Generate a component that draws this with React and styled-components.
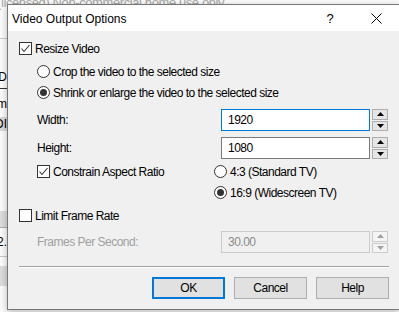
import React from "react";
import styled, { createGlobalStyle } from "styled-components";

const GlobalStyle = createGlobalStyle`
  html, body {
    margin: 0;
    padding: 0;
    background: #ffffff;
  }
  body {
    font-family: "Liberation Sans", Arial, sans-serif;
    font-size: 12px;
    color: #000;
  }
`;

const Desktop = styled.div`
  position: relative;
  width: 399px;
  height: 312px;
  overflow: hidden;
  background: #fbfbfb;
`;

// the app window behind the dialog
const Backdrop = styled.div`
  display: flex;
  flex-direction: column;
`;

const Watermark = styled.div`
  color: #a6a6a6;
  font-size: 13px;
  letter-spacing: -0.4px;
  white-space: nowrap;
  margin: -5px 0 0 -3px;
  height: 12px;
`;

const SideStrip = styled.div`
  width: 7px;
  overflow: hidden;
  display: flex;
  flex-direction: column;
`;

const SideRow = styled.div`
  height: ${(p) => p.$h}px;
  margin-top: ${(p) => p.$mt || 0}px;
  background: ${(p) => p.$bg || "transparent"};
  border-bottom: ${(p) => (p.$line ? `1px solid ${p.$line}` : "none")};
  display: flex;
  justify-content: flex-end;
  align-items: center;
  white-space: nowrap;
  font-size: 12px;
  color: #000;
`;

const Dialog = styled.div`
  position: absolute;
  left: 7px;
  top: 4px;
  width: 392px;
  height: 306px;
  box-sizing: border-box;
  border: 1px solid #777;
  border-right: none;
  background: #f0f0f0;
  box-shadow: 0 2px 7px rgba(0, 0, 0, 0.28);
  display: flex;
  flex-direction: column;
`;

const TitleBar = styled.div`
  height: 26px;
  background: #ffffff;
  display: flex;
  align-items: center;
  padding-left: 4px;
`;

const TitleText = styled.div`
  flex: 1;
  font-size: 12px;
  padding-top: 1px;
`;

const TitleButton = styled.div`
  width: 46px;
  height: 26px;
  display: flex;
  align-items: center;
  justify-content: center;
  font-size: 13px;
`;

const Body = styled.div`
  flex: 1;
  display: flex;
  flex-direction: column;
  padding: 7px 10px 0 11px;
  letter-spacing: -0.5px;
`;

const Row = styled.div`
  height: ${(p) => p.$h || 21}px;
  margin-top: ${(p) => p.$mt || 0}px;
  padding-left: ${(p) => (p.$indent ? 18 : 0)}px;
  display: flex;
  align-items: center;
  color: ${(p) => (p.$disabled ? "#a0a0a0" : "#000")};
`;

const Split = styled.div`
  display: grid;
  grid-template-columns: 177px 1fr;
  align-items: center;
  height: 100%;
  flex: 1;
`;

const Option = styled.label`
  display: flex;
  align-items: center;
  gap: 3px;
  white-space: nowrap;
`;

const Box = styled.span`
  width: 13px;
  height: 13px;
  box-sizing: border-box;
  border: 1px solid #333;
  background: #fff;
  display: flex;
  align-items: center;
  justify-content: center;
`;

const Radio = styled.span`
  width: 13px;
  height: 13px;
  box-sizing: border-box;
  border: 1px solid #333;
  border-radius: 50%;
  background: #fff;
  display: flex;
  align-items: center;
  justify-content: center;
  &::after {
    content: "";
    width: 7px;
    height: 7px;
    border-radius: 50%;
    background: ${(p) => (p.$on ? "#333" : "transparent")};
  }
`;

const Spinner = styled.div`
  display: flex;
  gap: 2px;
  height: 22px;
  margin-left: 7px;
`;

const Field = styled.div`
  width: 149px;
  box-sizing: border-box;
  border: 1px solid ${(p) => (p.$focus ? "#0078d7" : p.$disabled ? "#cccccc" : "#7a7a7a")};
  background: ${(p) => (p.$disabled ? "#f0f0f0" : "#fff")};
  color: ${(p) => (p.$disabled ? "#8a8a8a" : "#000")};
  display: flex;
  align-items: center;
  padding-left: 6px;
`;

const SpinCol = styled.div`
  width: 16px;
  display: flex;
  flex-direction: column;
  gap: 1px;
`;

const SpinBtn = styled.div`
  flex: 1;
  box-sizing: border-box;
  border: 1px solid ${(p) => (p.$disabled ? "#cccccc" : "#adadad")};
  background: ${(p) => (p.$disabled ? "#f4f4f4" : "#e5e5e5")};
  display: flex;
  align-items: center;
  justify-content: center;
`;

const Separator = styled.div`
  margin-top: 13px;
  border-top: 1px solid #a0a0a0;
  border-bottom: 1px solid #ffffff;
`;

const ButtonRow = styled.div`
  display: flex;
  justify-content: flex-end;
  gap: 9px;
  margin-top: 9px;
`;

const Button = styled.div`
  width: 73px;
  height: 22px;
  box-sizing: border-box;
  border: ${(p) => (p.$default ? "2px solid #0078d7" : "1px solid #adadad")};
  background: #e1e1e1;
  display: flex;
  align-items: center;
  justify-content: center;
`;

const Check = ({ on }) => (
  <Box>
    {on && (
      <svg width="11" height="11" viewBox="0 0 11 11">
        <polyline points="1.5,5.5 4,8.5 9.5,2" fill="none" stroke="#333" strokeWidth="1.1" />
      </svg>
    )}
  </Box>
);

const Arrow = ({ up, color }) => (
  <svg width="7" height="4" viewBox="0 0 7 4">
    <polygon points={up ? "0,4 7,4 3.5,0" : "0,0 7,0 3.5,4"} fill={color} />
  </svg>
);

const SpinField = ({ value, focus, disabled }) => {
  const c = disabled ? "#a0a0a0" : "#000";
  return (
    <Spinner>
      <Field $focus={focus} $disabled={disabled}>{value}</Field>
      <SpinCol>
        <SpinBtn $disabled={disabled}><Arrow up color={c} /></SpinBtn>
        <SpinBtn $disabled={disabled}><Arrow color={c} /></SpinBtn>
      </SpinCol>
    </Spinner>
  );
};

const App = () => {
  return (
    <Desktop>
      <GlobalStyle />
      <Backdrop>
        <Watermark>(licensed) Non-commercial home use only</Watermark>
        <SideStrip>
          <SideRow $h={31} $line="#c8c8c8" />
          <SideRow $h={23} $mt={26} $line="#333">D</SideRow>
          <SideRow $h={14} $mt={8}>rm</SideRow>
          <SideRow $h={14} $mt={6} $bg="#d9d9d9">OI</SideRow>
          <SideRow $h={16} $mt={80} $bg="#dcdcdc" $line="#b0b0b0" />
          <SideRow $h={28} $line="#c8c8c8">2.</SideRow>
          <SideRow $h={20} $mt={9} $bg="#dcdcdc" />
        </SideStrip>
      </Backdrop>

      <Dialog>
        <TitleBar>
          <TitleText>Video Output Options</TitleText>
          <TitleButton>?</TitleButton>
          <TitleButton>
            <svg width="11" height="11" viewBox="0 0 11 11">
              <path d="M0.5 0.5 L10.5 10.5 M10.5 0.5 L0.5 10.5" stroke="#000" strokeWidth="1" />
            </svg>
          </TitleButton>
        </TitleBar>
        <Body>
          <Row>
            <Option><Check on />Resize Video</Option>
          </Row>
          <Row $mt={2} $indent>
            <Option><Radio />Crop the video to the selected size</Option>
          </Row>
          <Row $indent>
            <Option><Radio $on />Shrink or enlarge the video to the selected size</Option>
          </Row>
          <Row $h={22} $mt={6} $indent>
            <Split>
              <span>Width:</span>
              <SpinField value="1920" focus />
            </Split>
          </Row>
          <Row $h={22} $mt={6} $indent>
            <Split>
              <span>Height:</span>
              <SpinField value="1080" />
            </Split>
          </Row>
          <Row $mt={2} $indent>
            <Split>
              <Option><Check on />Constrain Aspect Ratio</Option>
              <Option><Radio />4:3 (Standard TV)</Option>
            </Split>
          </Row>
          <Row $indent>
            <Split>
              <span />
              <Option><Radio $on />16:9 (Widescreen TV)</Option>
            </Split>
          </Row>
          <Row $mt={2}>
            <Option><Check />Limit Frame Rate</Option>
          </Row>
          <Row $h={22} $mt={5} $indent $disabled>
            <Split>
              <span>Frames Per Second:</span>
              <SpinField value="30.00" disabled />
            </Split>
          </Row>
          <Separator />
          <ButtonRow>
            <Button $default>OK</Button>
            <Button>Cancel</Button>
            <Button>Help</Button>
          </ButtonRow>
        </Body>
      </Dialog>
    </Desktop>
  );
};

export default App;
